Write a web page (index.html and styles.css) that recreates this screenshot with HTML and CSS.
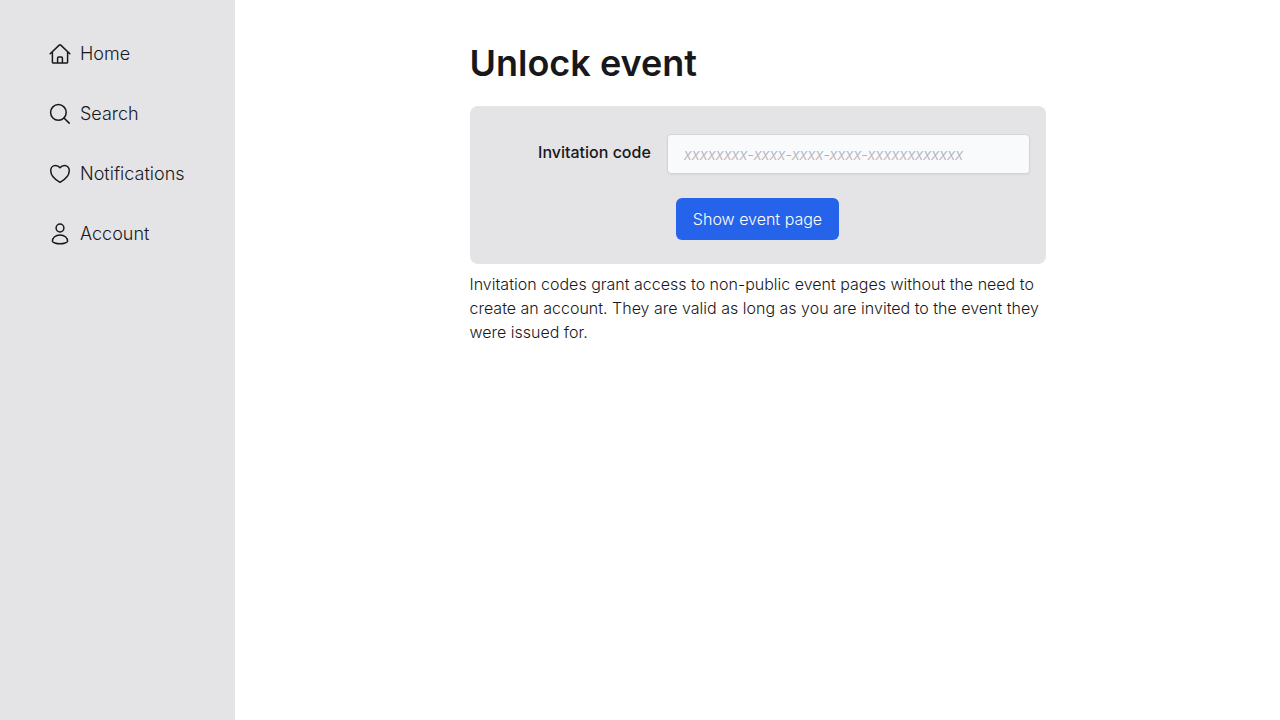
FILE: index.html
```html
<!DOCTYPE html>
<html lang="en">
<head>
<meta charset="utf-8">
<meta name="viewport" content="width=device-width, initial-scale=1">
<title>Unlock event</title>
<link rel="stylesheet" href="styles.css">
</head>
<body>
<div class="layout">
  <nav class="sidebar" aria-label="Main">
    <ul class="menu">
      <li><a class="menu-link" href="#home">
        <svg class="icon" viewBox="0 0 24 24" aria-hidden="true"><path d="M2.2 11.8 11.2 3.1a1.15 1.15 0 0 1 1.6 0l9 8.7M4.4 9.9v10c0 .6.5 1.1 1.1 1.1h13c.6 0 1.1-.5 1.1-1.1v-10M9.6 20.8v-4.7c0-.6.5-1.1 1.1-1.1h2.6c.6 0 1.1.5 1.1 1.1v4.7"/></svg>
        <span>Home</span></a></li>
      <li><a class="menu-link" href="#search">
        <svg class="icon" viewBox="0 0 24 24" aria-hidden="true"><circle cx="10.4" cy="10.4" r="7.8"/><path d="m16 16 5.2 5.1"/></svg>
        <span>Search</span></a></li>
      <li><a class="menu-link" href="#notifications">
        <svg class="icon" viewBox="0 0 24 24" aria-hidden="true"><path d="M12 5.7C10.8 4.1 9.3 3.5 7.5 3.5c-2.800 0-4.800 2.100-4.800 5C2.700 13.500 7.200 17.700 12 20.300c4.800-2.600 9.300-6.800 9.300-11.800 0-2.900-2-5-4.800-5-1.800 0-3.300.6-4.500 2.200Z"/></svg>
        <span>Notifications</span></a></li>
      <li><a class="menu-link" href="#account">
        <svg class="icon" viewBox="0 0 24 24" aria-hidden="true"><circle cx="12" cy="6" r="3.900"/><path d="M4.400 19.300c0-3.600 3.200-6.400 7.600-6.400s7.600 2.800 7.600 6.400c0 1.100-4 2.500-7.600 2.500s-7.600-1.400-7.600-2.500Z"/></svg>
        <span>Account</span></a></li>
    </ul>
  </nav>
  <main class="content">
    <div class="column">
      <h1 class="title">Unlock event</h1>
      <form class="panel">
        <div class="field">
          <label class="label" for="code">Invitation code</label>
          <input class="input" id="code" type="text" placeholder="xxxxxxxx-xxxx-xxxx-xxxx-xxxxxxxxxxxx">
        </div>
        <button class="button" type="submit">Show event page</button>
      </form>
      <p class="note">Invitation codes grant access to non-public event pages without the need to create an account. They are valid as long as you are invited to the event they were issued for.</p>
    </div>
  </main>
</div>
</body>
</html>
```
FILE: styles.css
```css
* {
  box-sizing: border-box;
}

body {
  margin: 0;
  background: #fff;
  color: #18181b;
  font-family: Inter, "Noto Sans", sans-serif;
  font-size: 16px;
  font-weight: 300;
  line-height: 24px;
}

.layout {
  display: flex;
  min-height: 100vh;
}

.sidebar {
  flex: none;
  width: 235px;
  padding: 40px 0 0 48px;
  background: #e4e4e7;
}

.menu {
  display: grid;
  gap: 32px;
  margin: 0;
  padding: 0;
  list-style: none;
}

.menu-link {
  display: flex;
  align-items: center;
  gap: 8px;
  color: inherit;
  font-size: 18px;
  line-height: 28px;
  text-decoration: none;
}

.icon {
  width: 24px;
  height: 24px;
  fill: none;
  stroke: currentColor;
  stroke-width: 1.5;
  stroke-linecap: round;
  stroke-linejoin: round;
}

.content {
  flex: 1;
  padding: 40px 16px;
}

.column {
  max-width: 576px;
  margin: 0 auto;
}

.title {
  margin: 0 0 20px;
  font-size: 36px;
  font-weight: 600;
  line-height: 46px;
}

.panel {
  display: grid;
  gap: 24px;
  padding: 28px 16px 24px;
  border-radius: 8px;
  background: #e4e4e7;
}

.field {
  display: grid;
  grid-template-columns: 1fr 2fr;
}

.label {
  padding: 6px 16px 0 0;
  font-weight: 500;
  text-align: right;
}

.input {
  width: 100%;
  min-width: 0;
  height: 40px;
  padding: 0 16px;
  border: 1px solid #d1d5db;
  border-radius: 4px;
  background: #f9fafb;
  box-shadow: 0 1px 2px rgba(0, 0, 0, 0.05);
  color: inherit;
  font: inherit;
}

.input::placeholder {
  color: #b0b0b8;
  font-size: 15px;
  font-style: italic;
  opacity: 1;
}

.button {
  justify-self: center;
  padding: 9px 17px;
  border: 0;
  border-radius: 6px;
  background: #2563eb;
  color: #fff;
  font: inherit;
}

.note {
  margin: 8px 0 0;
}
```
